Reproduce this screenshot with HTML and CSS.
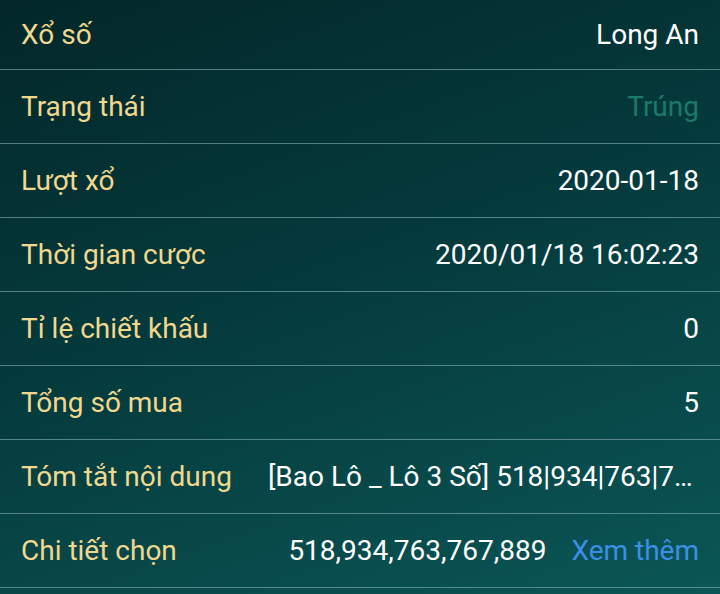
FILE: index.html
```html
<!DOCTYPE html>
<html lang="vi">
<head>
    <meta charset="UTF-8">
    <meta name="viewport" content="width=device-width, initial-scale=1.0">
    <title>Chi tiết cược</title>
    <link rel="stylesheet" href="styles.css">
</head>
<body>

<div class="detail">
    <div class="row first">
        <span class="label">Xổ số</span>
        <span class="value">Long An</span>
    </div>
    <div class="row">
        <span class="label">Trạng thái</span>
        <span class="value win">Trúng</span>
    </div>
    <div class="row">
        <span class="label">Lượt xổ</span>
        <span class="value">2020-01-18</span>
    </div>
    <div class="row">
        <span class="label">Thời gian cược</span>
        <span class="value">2020/01/18 16:02:23</span>
    </div>
    <div class="row">
        <span class="label">Tỉ lệ chiết khấu</span>
        <span class="value">0</span>
    </div>
    <div class="row">
        <span class="label">Tổng số mua</span>
        <span class="value">5</span>
    </div>
    <div class="row">
        <span class="label">Tóm tắt nội dung</span>
        <span class="value clip">[Bao Lô _ Lô 3 Số] 518|934|763|767|889</span>
    </div>
    <div class="row">
        <span class="label">Chi tiết chọn</span>
        <span class="value">518,934,763,767,889</span>
        <a class="more" href="#">Xem thêm</a>
    </div>
</div>

</body>
</html>
```

FILE: styles.css
```css
html, body {
    height: 100%;
}
body {
    margin: 0;
    font-family: Roboto, "Noto Sans", sans-serif;
    font-size: 28px;
    background: linear-gradient(160deg, #03272a 0%, #053a3c 45%, #0b5656 100%);
    overflow: hidden;
}
.detail {
    display: flex;
    flex-direction: column;
}
.row {
    display: flex;
    align-items: center;
    height: 73px;
    padding: 0 21px;
    border-bottom: 1px solid rgba(150, 190, 190, 0.55);
}
.row.first {
    height: 69px;
}
.label {
    flex: none;
    color: #f1d88f;
}
.value {
    flex: 1;
    min-width: 0;
    text-align: right;
    color: #ffffff;
    white-space: nowrap;
}
.value.win {
    color: #1b7a68;
}
.value.clip {
    margin-left: 36px;
    overflow: hidden;
    text-overflow: ellipsis;
}
.more {
    flex: none;
    margin-left: 25px;
    color: #3b8fe6;
    text-decoration: none;
}
```
